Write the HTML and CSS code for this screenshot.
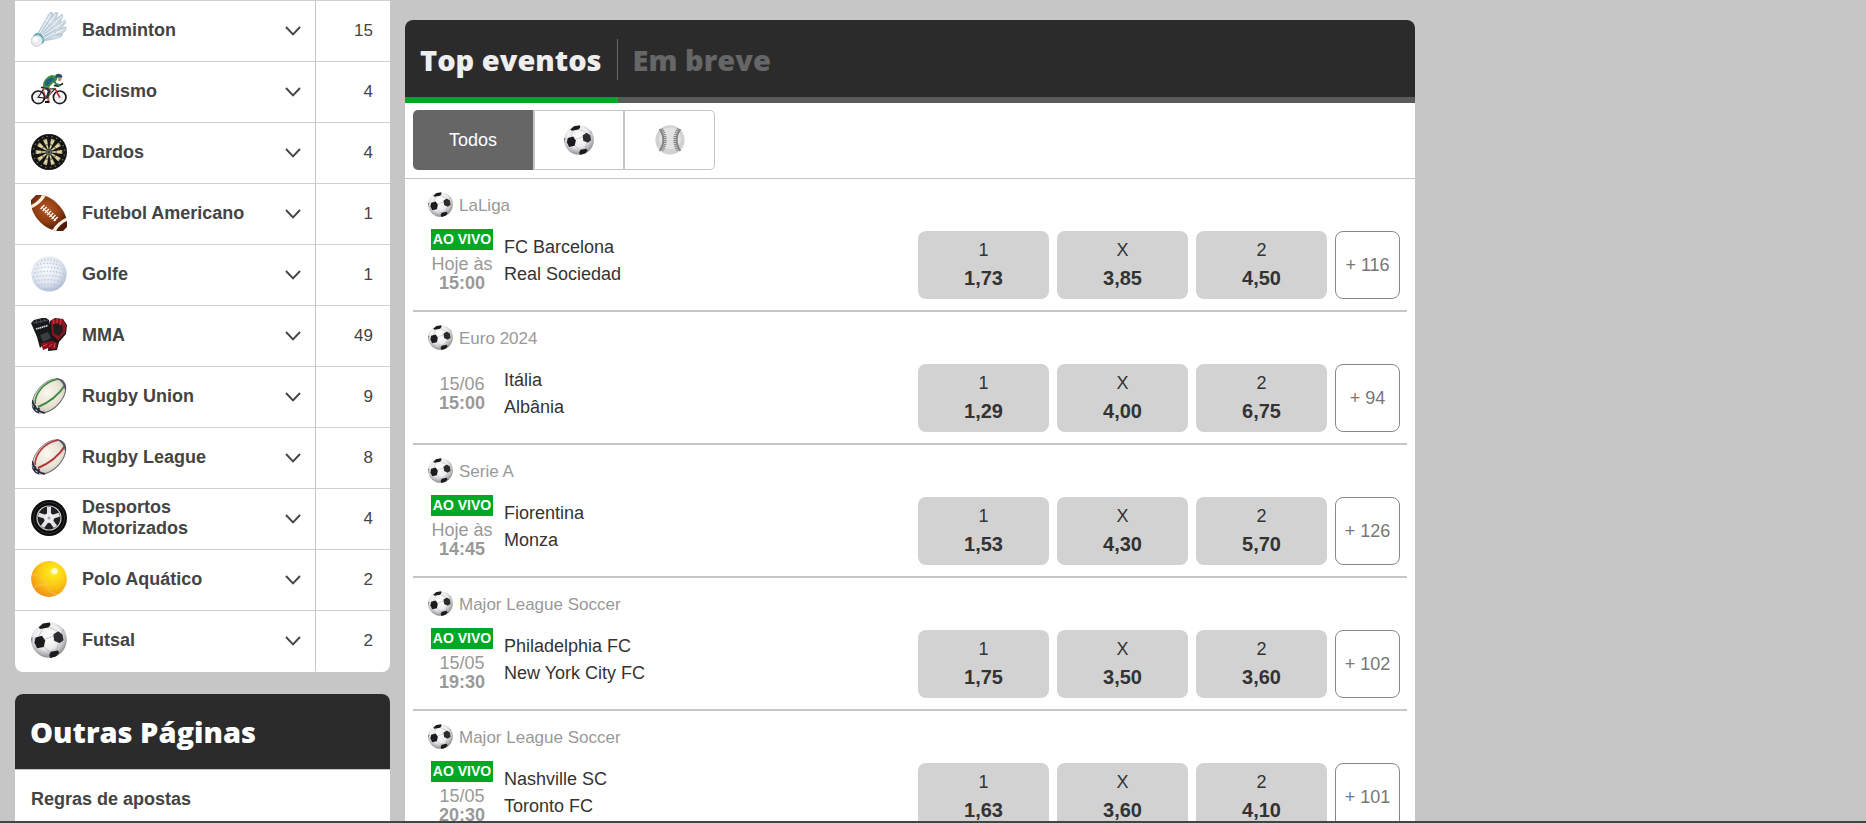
FILE: index.html
```html
<!DOCTYPE html>
<html lang="pt">
  <head>
    <meta charset="utf-8">
    <meta name="viewport" content="width=device-width, initial-scale=1">
    <title>Apostas</title>

    <link rel="stylesheet" href="styles.css">
  </head>
  <body>
    <!-- icones -->
    <svg class="sprite" aria-hidden="true">
      <defs>
        <radialGradient id="g-bola" cx="45%" cy="38%" r="62%">
          <stop offset="0" stop-color="#ffffff"/>
          <stop offset=".6" stop-color="#ececee"/>
          <stop offset="1" stop-color="#8f8f92"/>
        </radialGradient>
        <radialGradient id="g-golfe" cx="42%" cy="35%" r="65%">
          <stop offset="0" stop-color="#f8fafd"/>
          <stop offset=".65" stop-color="#dfe5ef"/>
          <stop offset="1" stop-color="#b3bfd6"/>
        </radialGradient>
        <radialGradient id="g-polo" cx="62%" cy="30%" r="75%">
          <stop offset="0" stop-color="#fffbc0"/>
          <stop offset=".16" stop-color="#fde51c"/>
          <stop offset=".5" stop-color="#fbcb10"/>
          <stop offset="1" stop-color="#f28c1c"/>
        </radialGradient>
        <radialGradient id="g-futam" cx="45%" cy="40%" r="60%">
          <stop offset="0" stop-color="#b5561f"/>
          <stop offset=".6" stop-color="#8d3b12"/>
          <stop offset="1" stop-color="#4f1c08"/>
        </radialGradient>
        <radialGradient id="g-rugby" cx="45%" cy="40%" r="60%">
          <stop offset="0" stop-color="#fbf8ee"/>
          <stop offset=".6" stop-color="#e9e4d6"/>
          <stop offset="1" stop-color="#c9c4b6"/>
        </radialGradient>
        <linearGradient id="g-pena" x1="0" y1="1" x2="1" y2="0">
          <stop offset="0" stop-color="#a9c3d4"/>
          <stop offset=".6" stop-color="#d5e1e8"/>
          <stop offset="1" stop-color="#b9c8d2"/>
        </linearGradient>
        <clipPath id="c-bola"><circle cx="18" cy="18" r="18"/></clipPath>
        <clipPath id="c-rugby"><ellipse cx="18" cy="18" rx="21" ry="13" transform="rotate(-47 18 18)"/></clipPath>
      </defs>

      <symbol id="i-futebol" viewBox="0 0 36 36">
        <circle cx="18" cy="18" r="17.8" fill="url(#g-bola)"/>
        <g fill="none" stroke="#a5a5a8" stroke-width=".6">
          <path d="M14 17l9-3M12 6l-4 8M18 5l8 4M13 25l6 5M27 22l-1 7M4 18L1 15M31 11l2-3M6 24l-2 3"/>
        </g>
        <g fill="#1c1c1e" clip-path="url(#c-bola)">
          <path d="M7.600 5.400L12 1.600l7-1.200.4 2.600-2 2.400L9.200 7z"/>
          <path d="M4.500 15.500l6.500-1.700 3.200 4.700-1.400 6.400-6.600 1.400-2.800-5.600z"/>
          <path d="M22.400 12.200l4.800-3 4.300 3.200 1 5.800-4 3-5.400-2.400z" fill="#2c2c2f"/>
          <path d="M18.200 33l1.600-3.300 7-1.300 1.500 2.400-3 3.500-6 2z"/>
          <path d="M32 7l3 4-2-5z" fill="#55555a"/>
          <path d="M0 15l1.300 1.500L1 22z" fill="#55555a"/>
        </g>
      </symbol>

      <symbol id="i-beisebol" viewBox="0 0 36 36">
        <circle cx="18" cy="18" r="17.600" fill="#d2d2d2"/>
        <circle cx="18" cy="16" r="13" fill="#e2e2e2"/>
        <g fill="none" stroke="#858585">
          <path d="M5.500 5c6 8 6 18 0 26M30.500 5c-6 8-6 18 0 26" stroke-width="2.400"/>
          <path d="M8 4.500c6 8 6 19 0 27M28 4.500c-6 8-6 19 0 27" stroke-width="3" stroke-dasharray="1.400 1"/>
        </g>
      </symbol>

      <symbol id="i-badminton" viewBox="0 0 36 36">
        <g fill="url(#g-pena)" stroke="#9fb4c2" stroke-width=".4">
          <path d="M7 21L17 3l3-3 2 1-2 6-9 16z"/>
          <path d="M9 22L21 4l4-4 2 1-2 6-12 17z"/>
          <path d="M10 23L26 6l5-4 1 2-3 7-15 14z"/>
          <path d="M11 24L29 11l5-3 1 2-4 6-17 10z"/>
          <path d="M12 25l18-9 5-1v3l-4 4-17 6z"/>
          <path d="M12 26l16-4 4 0-2 3-6 2-11 2z"/>
        </g>
        <g stroke="#fff" stroke-width=".8" fill="none">
          <path d="M8 22L20 2M10 22L25 2M11 23L31 4M12 24L34 9M13 26l21-9"/>
        </g>
        <path d="M14 10c6 3 9 7 12 14" fill="none" stroke="#b6c8d2" stroke-width=".7"/>
        <path d="M4 22c4-3 9 2 9 8l-2 2-9-8z" fill="#4da3ad"/>
        <path d="M6 22.500c3 1 5 3 6 6" fill="none" stroke="#cfe8ea" stroke-width=".8"/>
        <circle cx="5.800" cy="28.800" r="5.600" fill="#e9edf1" stroke="#a9b5bf" stroke-width=".6"/>
        <circle cx="4.600" cy="27.500" r="2.400" fill="#fff"/>
      </symbol>

      <symbol id="i-ciclismo" viewBox="0 0 36 36">
        <g fill="none" stroke="#1a1a1a">
          <circle cx="7.300" cy="24.300" r="6.300" stroke-width="1.700"/>
          <circle cx="28.700" cy="24.300" r="6.300" stroke-width="1.700"/>
          <g stroke="#aaa" stroke-width=".4">
            <path d="M1.500 24.300h11.600M7.300 18.500v11.600M3.200 20.200l8.200 8.200M11.400 20.200l-8.200 8.200"/>
            <path d="M23 24.300h11.400M28.700 18.500v11.600M24.600 20.200l8.200 8.200M32.800 20.200l-8.200 8.200"/>
          </g>
          <path d="M7.300 24.300l7.700 1 9-9.500-11.500.2z" stroke-width="1.100"/>
          <path d="M24 15.500l4.700 8.800" stroke="#b22234" stroke-width="1.500"/>
          <path d="M12 15.500l3 10" stroke="#c23544" stroke-width="1"/>
          <path d="M10 14.500h5" stroke-width="1.600"/>
          <path d="M23 12.500l4 .6 5-2.600" stroke-width="1.500"/>
        </g>
        <path d="M17 14l2.500 5-2.500 4 .5 5" fill="none" stroke="#b87850" stroke-width="2.400"/>
        <path d="M13.500 12l4.500 6-2 7" fill="none" stroke="#22313e" stroke-width="2.600"/>
        <path d="M14 29h4.500" stroke="#111" stroke-width="2"/>
        <path d="M12 12.500c0-5 4-9 8.500-10.500l6 1-.5 4-5 4-3.500 4-5-.5z" fill="#3d8f3a"/>
        <path d="M13.500 11.500c1-4 3-6 6.500-7l4 1-4 3.500-3.500 4z" fill="#225f8c"/>
        <path d="M22.500 7l2.500 4 4 1.500" fill="none" stroke="#2f7f50" stroke-width="2"/>
        <path d="M24.500 2c2-2 6-1.500 7 1.500l-1 1.500-6-.5z" fill="#28506f"/>
        <path d="M27 4.500l3.800.3-.8 3-2.500.2z" fill="#c98a63"/>
      </symbol>

      <symbol id="i-dardos" viewBox="0 0 36 36">
        <circle cx="18" cy="18" r="18" fill="#141412"/>
        <g transform="rotate(-9 18 18)" fill="none" stroke="#e0d0a2">
          <circle cx="18" cy="18" r="15.600" stroke="#6f6a55" stroke-width="1.300" pathLength="40" stroke-dasharray=".6 1.400"/>
          <circle cx="18" cy="18" r="12.700" stroke-width="1.400" pathLength="20" stroke-dasharray="1 1" stroke="#b8ab80"/>
          <circle cx="18" cy="18" r="10" stroke-width="4.400" pathLength="20" stroke-dasharray="1 1"/>
          <circle cx="18" cy="18" r="7.400" stroke-width="1.300" pathLength="20" stroke-dasharray="1 1" stroke="#8d8766"/>
          <circle cx="18" cy="18" r="4.800" stroke-width="4" pathLength="20" stroke-dasharray="1 1"/>
        </g>
        <circle cx="18" cy="18" r="2.600" fill="#5c6a5a"/>
        <circle cx="18" cy="18" r="1" fill="#2b2b27"/>
      </symbol>

      <symbol id="i-futam" viewBox="0 0 36 36">
        <path d="M0 0H10C22 1 35 15 36 27V36H27C14 35 1 22 0 9z" fill="url(#g-futam)"/>
        <path d="M0 13.500C6 11 12 6 14.500 1L11 0C9 4 5 8 0 10z" fill="#f6efe2"/>
        <path d="M36 22.500C30 25 24 30 21.500 35l3.500 1c2-4 6-8 11-10z" fill="#f6efe2"/>
        <path d="M10.500 12L25 25.500" stroke="#fff" stroke-width="1" fill="none"/>
        <path d="M9.500 14l4-4M11.700 16l4-4M13.900 18l4-4M16.100 20l4-4M18.300 22l4-4M20.500 24l4-4M22.700 26l4-4" stroke="#fff" stroke-width="1.300" fill="none"/>
        <path d="M0 0h5L0 5zM36 36h-4l4-4z" fill="#fff"/>
      </symbol>

      <symbol id="i-golfe" viewBox="0 0 36 36">
        <circle cx="18" cy="18" r="17.600" fill="url(#g-golfe)"/>
        <!-- covinhas -->
        <g fill="none" stroke="#a9b7d0" stroke-width="1.200" stroke-dasharray="1.400 1.800" opacity=".75" clip-path="url(#c-bola)">
          <path d="M10 5q8-3 17 1M6 9q12-4 24 1M4 13q14-4 29 1M3 17q15-4 31 1M2 21q16-3 32 1M4 25q14-3 29 1M7 29q11-2 23 1M11 33q8-1 14 0"/>
        </g>
      </symbol>

      <symbol id="i-mma" viewBox="0 0 36 36">
        <path d="M19 4l5-3 8 1 4 6-1 9-7 8-2 8-9 1z" fill="#1a1516"/>
        <path d="M20 4l4-2 8 .5 3 5-1 8-7 8-6-6z" fill="#8f1420"/>
        <path d="M22 8l4-3 5 3 1 6-4 5-5-2z" fill="#241d1e"/>
        <path d="M22 2l1 5M26 1.500l0 5M30 2l-1 6" stroke="#d42c38" stroke-width="1.500"/>
        <path d="M0 6l3-3 4-1 4-1 4 0 3 2 3 14 2 8-10 2-4 4L6 20z" fill="#17191a"/>
        <path d="M2 6l15-3M5 3l1 4M9 2l1 4M13 1.500l1 3.500" stroke="#4c5052" stroke-width="1"/>
        <path d="M5 12l12-3.500" stroke="#d3d3d3" stroke-width="1.600" stroke-dasharray="1.600 .4"/>
        <path d="M9 18l8-3 3 6-8 4z" fill="#3a3e40"/>
        <path d="M10 26l11-2 5 2-1 6-4 0-4-1-5 2z" fill="#8e101c"/>
        <path d="M12 29l4-1.500M18 30l3-3M24 26l-1 5" stroke="#e0444d" stroke-width="1"/>
      </symbol>

      <symbol id="i-rugby" viewBox="0 0 36 36">
        <g clip-path="url(#c-rugby)">
          <path d="M0 0h36v36H0z" fill="url(#g-rugby)"/>
          <ellipse cx="18" cy="18" rx="20.600" ry="12.600" transform="rotate(-47 18 18)" fill="none" stroke="#85827c" stroke-width="1.200"/>
          <path d="M4 26C4 15 13 4 27 1" fill="none" stroke="currentColor" stroke-width="1.600"/>
          <path d="M7 29C19 24 29 15 34 7" fill="none" stroke="currentColor" stroke-width="2"/>
          <path d="M12 35C23 33 33 23 35 12" fill="none" stroke="#77777a" stroke-width="1.200"/>
          <path d="M0 24l3 0c0 4 5 9 10 9l-1 4H0z" fill="#d9dadd"/>
          <path d="M1 22c1 6 6 12 13 13M0 27c2 4 4 7 8 9M4 27l-1 9M8 30l-1 6" fill="none" stroke="#272d3d" stroke-width="1.900"/>
          <path d="M26 0c5 2 8 6 9 12M30 0c2 1 5 4 6 7" fill="none" stroke="#4a5163" stroke-width="1.800"/>
        </g>
      </symbol>

      <symbol id="i-pneu" viewBox="0 0 36 36">
        <circle cx="18" cy="18" r="18" fill="#0b0b0c"/>
        <circle cx="18" cy="18" r="15.600" fill="none" stroke="#38383a" stroke-width=".8"/>
        <circle cx="18" cy="18" r="12" fill="#202022" stroke="#c9cbcd" stroke-width="1.200"/>
        <g stroke="#e2e4e6" stroke-width="4">
          <path d="M18 18V7"/>
          <path d="M18 18V7" transform="rotate(72 18 18)"/>
          <path d="M18 18V7" transform="rotate(144 18 18)"/>
          <path d="M18 18V7" transform="rotate(216 18 18)"/>
          <path d="M18 18V7" transform="rotate(288 18 18)"/>
        </g>
        <circle cx="18" cy="18" r="5" fill="#eceeef"/>
        <circle cx="18" cy="18" r="1.500" fill="#a8aaac"/>
      </symbol>

      <symbol id="i-polo" viewBox="0 0 36 36">
        <circle cx="18" cy="18" r="17.900" fill="url(#g-polo)"/>
        <path d="M1 14c8-1 12 4 14 9s5 10 11 10M3 27c5-4 9-4 13-2M15 23c6 1 12-1 18-7" fill="none" stroke="#fbc569" stroke-width=".7"/>
        <circle cx="24" cy="10" r="3" fill="#fff" opacity=".65"/>
      </symbol>

      <symbol id="i-seta" viewBox="0 0 16 10">
        <path d="M1 1l7 7.400L15 1" fill="none" stroke="#444" stroke-width="1.900"/>
      </symbol>
    </svg>

    <div class="pagina">
      <aside class="lateral">
        <ul class="desportos">
          <li>
            <a href="#"><svg class="icone"><use href="#i-badminton"/></svg><span>Badminton</span></a>
            <button type="button" class="abrir" aria-label="Abrir Badminton"><svg><use href="#i-seta"/></svg></button>
            <span class="total">15</span>
          </li>
          <li>
            <a href="#"><svg class="icone"><use href="#i-ciclismo"/></svg><span>Ciclismo</span></a>
            <button type="button" class="abrir" aria-label="Abrir Ciclismo"><svg><use href="#i-seta"/></svg></button>
            <span class="total">4</span>
          </li>
          <li>
            <a href="#"><svg class="icone"><use href="#i-dardos"/></svg><span>Dardos</span></a>
            <button type="button" class="abrir" aria-label="Abrir Dardos"><svg><use href="#i-seta"/></svg></button>
            <span class="total">4</span>
          </li>
          <li>
            <a href="#"><svg class="icone"><use href="#i-futam"/></svg><span>Futebol Americano</span></a>
            <button type="button" class="abrir" aria-label="Abrir Futebol Americano"><svg><use href="#i-seta"/></svg></button>
            <span class="total">1</span>
          </li>
          <li>
            <a href="#"><svg class="icone"><use href="#i-golfe"/></svg><span>Golfe</span></a>
            <button type="button" class="abrir" aria-label="Abrir Golfe"><svg><use href="#i-seta"/></svg></button>
            <span class="total">1</span>
          </li>
          <li>
            <a href="#"><svg class="icone"><use href="#i-mma"/></svg><span>MMA</span></a>
            <button type="button" class="abrir" aria-label="Abrir MMA"><svg><use href="#i-seta"/></svg></button>
            <span class="total">49</span>
          </li>
          <li>
            <a href="#"><svg class="icone union"><use href="#i-rugby"/></svg><span>Rugby Union</span></a>
            <button type="button" class="abrir" aria-label="Abrir Rugby Union"><svg><use href="#i-seta"/></svg></button>
            <span class="total">9</span>
          </li>
          <li>
            <a href="#"><svg class="icone league"><use href="#i-rugby"/></svg><span>Rugby League</span></a>
            <button type="button" class="abrir" aria-label="Abrir Rugby League"><svg><use href="#i-seta"/></svg></button>
            <span class="total">8</span>
          </li>
          <li>
            <a href="#"><svg class="icone"><use href="#i-pneu"/></svg><span>Desportos<br>Motorizados</span></a>
            <button type="button" class="abrir" aria-label="Abrir Desportos Motorizados"><svg><use href="#i-seta"/></svg></button>
            <span class="total">4</span>
          </li>
          <li>
            <a href="#"><svg class="icone"><use href="#i-polo"/></svg><span>Polo Aquático</span></a>
            <button type="button" class="abrir" aria-label="Abrir Polo Aquático"><svg><use href="#i-seta"/></svg></button>
            <span class="total">2</span>
          </li>
          <li>
            <a href="#"><svg class="icone"><use href="#i-futebol"/></svg><span>Futsal</span></a>
            <button type="button" class="abrir" aria-label="Abrir Futsal"><svg><use href="#i-seta"/></svg></button>
            <span class="total">2</span>
          </li>
        </ul>

        <div class="outras">
          <h2>Outras Páginas</h2>
          <a href="#">Regras de apostas</a>
        </div>
      </aside>

      <main class="eventos">
        <div class="abas">
          <button type="button" class="aba ativa"><span>Top eventos</span></button>
          <button type="button" class="aba"><span>Em breve</span></button>
        </div>

        <div class="filtros">
          <div class="grupo">
            <button type="button" class="filtro todos">Todos</button>
            <button type="button" class="filtro" aria-label="Futebol"><svg><use href="#i-futebol"/></svg></button>
            <button type="button" class="filtro" aria-label="Beisebol"><svg><use href="#i-beisebol"/></svg></button>
          </div>
        </div>

        <div class="lista">
          <section class="evento">
            <div class="liga"><svg><use href="#i-futebol"/></svg>LaLiga</div>
            <div class="jogo">
              <div class="hora"><span class="vivo">AO VIVO</span><span>Hoje às</span><b>15:00</b></div>
              <a class="equipas" href="#">FC Barcelona<br>Real Sociedad</a>
              <div class="odds">
                <button type="button" class="odd">1<b>1,73</b></button>
                <button type="button" class="odd">X<b>3,85</b></button>
                <button type="button" class="odd">2<b>4,50</b></button>
                <button type="button" class="mais">+ 116</button>
              </div>
            </div>
          </section>

          <section class="evento">
            <div class="liga"><svg><use href="#i-futebol"/></svg>Euro 2024</div>
            <div class="jogo">
              <div class="hora"><span>15/06</span><b>15:00</b></div>
              <a class="equipas" href="#">Itália<br>Albânia</a>
              <div class="odds">
                <button type="button" class="odd">1<b>1,29</b></button>
                <button type="button" class="odd">X<b>4,00</b></button>
                <button type="button" class="odd">2<b>6,75</b></button>
                <button type="button" class="mais">+ 94</button>
              </div>
            </div>
          </section>

          <section class="evento">
            <div class="liga"><svg><use href="#i-futebol"/></svg>Serie A</div>
            <div class="jogo">
              <div class="hora"><span class="vivo">AO VIVO</span><span>Hoje às</span><b>14:45</b></div>
              <a class="equipas" href="#">Fiorentina<br>Monza</a>
              <div class="odds">
                <button type="button" class="odd">1<b>1,53</b></button>
                <button type="button" class="odd">X<b>4,30</b></button>
                <button type="button" class="odd">2<b>5,70</b></button>
                <button type="button" class="mais">+ 126</button>
              </div>
            </div>
          </section>

          <section class="evento">
            <div class="liga"><svg><use href="#i-futebol"/></svg>Major League Soccer</div>
            <div class="jogo">
              <div class="hora"><span class="vivo">AO VIVO</span><span>15/05</span><b>19:30</b></div>
              <a class="equipas" href="#">Philadelphia FC<br>New York City FC</a>
              <div class="odds">
                <button type="button" class="odd">1<b>1,75</b></button>
                <button type="button" class="odd">X<b>3,50</b></button>
                <button type="button" class="odd">2<b>3,60</b></button>
                <button type="button" class="mais">+ 102</button>
              </div>
            </div>
          </section>

          <section class="evento">
            <div class="liga"><svg><use href="#i-futebol"/></svg>Major League Soccer</div>
            <div class="jogo">
              <div class="hora"><span class="vivo">AO VIVO</span><span>15/05</span><b>20:30</b></div>
              <a class="equipas" href="#">Nashville SC<br>Toronto FC</a>
              <div class="odds">
                <button type="button" class="odd">1<b>1,63</b></button>
                <button type="button" class="odd">X<b>3,60</b></button>
                <button type="button" class="odd">2<b>4,10</b></button>
                <button type="button" class="mais">+ 101</button>
              </div>
            </div>
          </section>
        </div>
      </main>
    </div>
  </body>
</html>
```
FILE: styles.css
```css
* {
  box-sizing: border-box;
}

body {
  margin: 0;
  height: 100vh;
  overflow: hidden;
  background-color: #c6c6c6;
  border-bottom: 2px solid #444;
  font-family: "Liberation Sans", Arial, sans-serif;
  font-size: 18px;
  color: #333;
}

a {
  color: inherit;
  text-decoration: none;
}

button {
  font: inherit;
  color: inherit;
  border: 0;
  padding: 0;
  background: none;
  cursor: pointer;
}

.sprite {
  position: absolute;
  width: 0;
  height: 0;
}

.pagina {
  display: flex;
  align-items: flex-start;
  gap: 15px;
  max-width: 1415px;
  padding-left: 15px;
}

/* coluna da esquerda */
.lateral {
  flex: 0 0 375px;
}

.desportos {
  list-style: none;
  margin: 0 0 22px;
  padding: 0 0 1px;
  background-color: #fff;
  border-radius: 0 0 8px 8px;
}
.desportos li {
  display: flex;
  align-items: stretch;
  height: 61px;
  border-top: 1px solid #d0d0d0;
}
.desportos a {
  flex: 1;
  display: flex;
  align-items: center;
  gap: 15px;
  padding: 0 0 2px 16px;
  font-weight: bold;
  line-height: 21px;
  color: #444;
}

.icone {
  width: 36px;
  height: 36px;
}
.union {
  color: #3f8a45;
}
.league {
  color: #b3323c;
}

.abrir {
  width: 44px;
}
.abrir svg {
  display: block;
  width: 16px;
  height: 10px;
  margin: 0 auto;
}

.total {
  width: 75px;
  padding-right: 17px;
  border-left: 1px solid #c6c6c6;
  font-size: 17px;
  line-height: 60px;
  text-align: right;
  color: #444;
}

.outras {
  background-color: #fff;
  border-radius: 8px;
  overflow: hidden;
}
.outras h2 {
  margin: 0;
  padding: 0 15px;
  background-color: #2b2b2b;
  border-bottom: 1px solid #c6c6c6;
  font-family: "Open Sans", sans-serif;
  font-size: 29px;
  font-weight: 800;
  line-height: 75px;
  color: #fff;
}
.outras a {
  display: block;
  padding: 0 16px;
  font-weight: bold;
  line-height: 58px;
  color: #444;
}

/* eventos */
.eventos {
  flex: 1;
  margin-top: 20px;
  background-color: #fff;
  border-radius: 8px 8px 0 0;
  overflow: hidden;
}

.abas {
  display: flex;
  background-color: #2b2b2b;
  box-shadow: inset 0 -6px #5a5a5a;
}
.aba {
  height: 83px;
  padding-top: 2px;
  border-bottom: 6px solid transparent;
  font-family: "Open Sans", sans-serif;
  font-size: 29px;
  font-weight: 800;
  color: #666;
}
.aba span {
  display: block;
  padding: 0 15px;
  line-height: 41px;
}
.ativa {
  border-bottom-color: #00a826;
  color: #eee;
}
.ativa span {
  border-right: 1px solid #666;
}

.filtros {
  padding: 7px 8px 8px;
  border-bottom: 1px solid #c6c6c6;
}
.grupo {
  display: flex;
}
.filtro {
  width: 90px;
  height: 60px;
  border: 1px solid #c6c6c6;
  border-left-width: 2px;
  border-right-width: 0;
}
.filtro:last-child {
  width: 92px;
  border-right-width: 1px;
  border-radius: 0 5px 5px 0;
}
.filtro svg {
  display: block;
  width: 30px;
  height: 30px;
  margin: 0 auto;
}
.todos {
  width: 120px;
  border: 0;
  border-radius: 5px 0 0 5px;
  background-color: #666;
  color: #fff;
}

.lista {
  padding: 0 8px;
}

.evento {
  padding: 13px 7px 11px 15px;
  border-bottom: 2px solid #c6c6c6;
}

.liga {
  display: flex;
  align-items: flex-start;
  gap: 6px;
  margin-bottom: 3px;
  font-size: 17px;
  line-height: 28px;
  color: #999;
}
.liga svg {
  width: 25px;
  height: 25px;
}

.jogo {
  display: flex;
  align-items: center;
  min-height: 76px;
}

.hora {
  display: flex;
  flex-direction: column;
  align-items: center;
  width: 68px;
  margin-right: 8px;
  line-height: 19px;
  color: #999;
}
.vivo {
  margin-bottom: 5px;
  padding: 0 2px;
  background-color: #00a826;
  font-size: 14px;
  font-weight: bold;
  line-height: 21px;
  color: #fff;
}

.equipas {
  flex: 1;
  line-height: 27px;
  color: #333;
}

.odds {
  display: flex;
  gap: 8px;
  padding-top: 8px;
}
.odd {
  width: 131px;
  height: 68px;
  padding-bottom: 2px;
  border-radius: 8px;
  background-color: #d2d2d2;
  line-height: 28px;
}
.odd b {
  display: block;
  font-size: 20px;
}
.mais {
  width: 65px;
  height: 68px;
  border: 1px solid #888;
  border-radius: 8px;
  color: #777;
}
```
